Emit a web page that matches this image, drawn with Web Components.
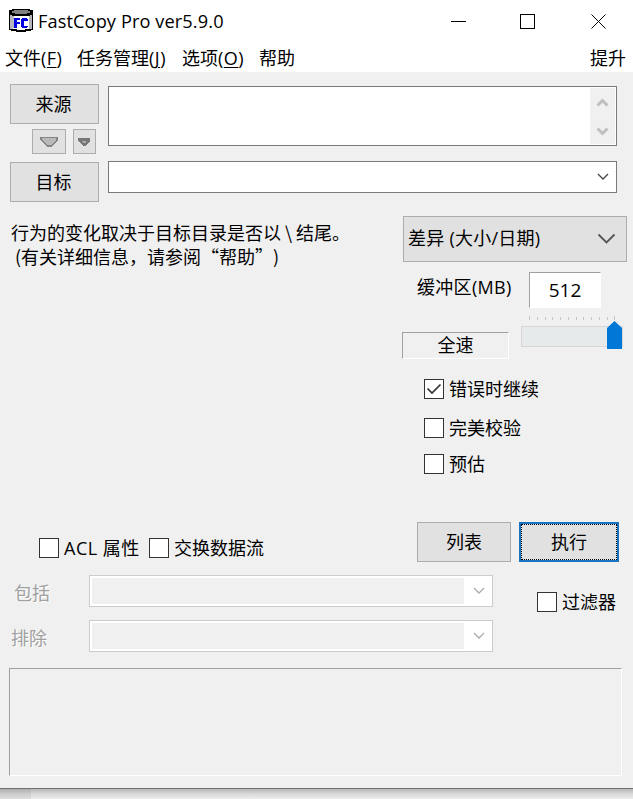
<!DOCTYPE html>
<html lang="zh-CN">
<head>
<meta charset="utf-8">
<title>FastCopy Pro</title>
<style>
  body {
    margin: 0;
    background: #e6e6e6;
    overflow: hidden;
  }
</style>
</head>
<body>
<fc-window></fc-window>
<fc-desktop></fc-desktop>

<script>
class FcElement extends HTMLElement {
  constructor() {
    super();
    this.shadow = this.attachShadow({mode: 'open'});
  }

  connectedCallback() {
    this.shadow.innerHTML = this.render();
  }
}

class FcTitlebar extends FcElement {
  render() {
    return `
      <style>
        :host {
          display: flex;
          align-items: center;
          height: 42px;
          padding-left: 9px;
          font-size: 18.2px;
          letter-spacing: .1px;
        }
        .title {
          flex: 1;
          margin-left: 5px;
          line-height: 42px;
          white-space: nowrap;
        }
        svg { display: block; }
        .controls {
          width: 195px;
          height: 42px;
        }
      </style>
      <svg width="24" height="24" shape-rendering="crispEdges">
        <path d="M3 0H21V1H24V21H22V22H17V23H7V22H2V21H0V1H3Z" fill="#000"/>
        <path d="M4 7H20V20H16V21H8V20H4Z" fill="#fff"/>
        <path d="M1 6H3V7H5V19H4V20H1ZM20 7H21V6H23V20H20Z" fill="#b4b4bc"/>
        <path d="M5 1H19V2H21V4H18V5H6V4H3V2H5Z" fill="#808080"/>
        <path d="M5 9H11V11H8V13H11V15H8V19H5ZM13 9H18V10H19V12H15V17H19V18H18V19H13V18H12V10H13Z" fill="#0000e0"/>
      </svg>
      <div class="title"><slot></slot></div>
      <svg class="controls" fill="none" stroke="#000" viewBox="-20 0 195 42">
        <path d="M-7 21.500H8M62.500 14.500H76.500V28.500H62.500Z" shape-rendering="crispEdges"/>
        <path d="M133.500 14.500L147.500 28.500M147.500 14.500L133.500 28.500"/>
      </svg>
    `;
  }
}

class FcMenubar extends FcElement {
  render() {
    return `
      <style>
        :host {
          display: flex;
          height: 30px;
          padding: 0 7px 0 5px;
          line-height: 32px;
        }
        ::slotted(:last-child) { margin-left: auto; }
      </style>
      <slot></slot>
    `;
  }
}

class FcMenu extends FcElement {
  render() {
    const key = this.getAttribute('key');
    return `
      <style>
        :host { display: block; white-space: nowrap; }
        span { letter-spacing: .5px; }
        u { text-underline-offset: 2px; text-decoration-thickness: 1px; }
      </style>
      <slot></slot>${key ? `<span>(<u>${key}</u>)</span>` : ''}
    `;
  }
}

class FcButton extends FcElement {
  render() {
    return `
      <style>
        :host {
          display: flex;
          align-items: center;
          justify-content: center;
          box-sizing: border-box;
          height: 40px;
          padding: 0 2px 2px 0;
          border: 1px solid #adadad;
          background: #e1e1e1;
        }
        :host([default]) {
          border: 2px solid #1874bf;
          outline: 1px dotted #000;
          outline-offset: -3px;
        }
      </style>
      <slot></slot>
    `;
  }
}

class FcMemo extends FcElement {
  render() {
    return `
      <style>
        :host {
          display: flex;
          justify-content: flex-end;
          box-sizing: border-box;
          height: 60px;
          padding: 1px;
          border: 1px solid #7a7a7a;
          background: #fff;
        }
        svg { background: #f0f0f0; }
      </style>
      <svg width="25" height="56" fill="none" stroke="#bfbfbf" stroke-width="3">
        <path d="M7.500 17.500L12.500 12.500L17.500 17.500M7.500 40.500L12.500 45.500L17.500 40.500"/>
      </svg>
    `;
  }
}

class FcCombo extends FcElement {
  render() {
    return `
      <style>
        :host {
          --arrow: #444;
          display: flex;
          align-items: stretch;
          box-sizing: border-box;
          height: 32px;
          padding: 2px;
          border: 1px solid #7a7a7a;
          background: #fff;
        }
        :host([disabled]) { --arrow: #aaa; border-color: #ccc; }
        :host([disabled]) .value { background: #f0f0f0; }
        .value { flex: 1; }
        svg { display: block; stroke: var(--arrow); }
      </style>
      <div class="value"></div>
      <svg width="26" height="26" fill="none" stroke-width="1.300">
        <path d="M10 10L15 15L20 10"/>
      </svg>
    `;
  }
}

class FcSelect extends FcElement {
  render() {
    return `
      <style>
        :host {
          display: flex;
          align-items: center;
          justify-content: space-between;
          box-sizing: border-box;
          height: 46px;
          padding: 0 10px 2px 4px;
          border: 1px solid #adadad;
          background: #e1e1e1;
          letter-spacing: .25px;
          white-space: nowrap;
        }
        span { padding-bottom: 2px; }
      </style>
      <span><slot></slot></span>
      <svg width="19" height="12" fill="none" stroke="#555" stroke-width="1.800">
        <path d="M1.500 2.500L9.500 10.500L17.500 2.500"/>
      </svg>
    `;
  }
}

class FcCheck extends FcElement {
  render() {
    const mark = this.hasAttribute('checked') ? '<path d="M3.500 9.500L8 14L16.500 5.500"/>' : '';
    return `
      <style>
        :host {
          display: flex;
          align-items: center;
          gap: 5px;
          height: 20px;
          line-height: 20px;
          white-space: nowrap;
        }
        svg {
          box-sizing: border-box;
          flex: none;
          border: 1px solid #333;
          background: #fff;
        }
      </style>
      <svg width="20" height="20" viewBox="1 1 18 18" fill="none" stroke="#333" stroke-width="1.700">${mark}</svg>
      <span><slot></slot></span>
    `;
  }
}

// Box with a one pixel sunken edge
class FcSunken extends FcElement {
  render() {
    return `
      <style>
        :host {
          display: block;
          box-sizing: border-box;
          border: 1px solid;
          border-color: #a0a0a0 #fff #fff #a0a0a0;
          text-align: center;
        }
      </style>
      <slot></slot>
    `;
  }
}

class FcSlider extends FcElement {
  render() {
    let ticks = '';
    for (let i = 0; i < 12; i++) {
      const x = Math.round(8 + i * 7.75);
      const end = i === 0 || i === 11;
      ticks += `<path d="M${x + 0.5} ${end ? 0 : 1}V4"/>`;
    }
    return `
      <style>
        :host { display: block; }
        svg { display: block; }
      </style>
      <svg width="103" height="34">
        <g stroke="#c4c4c4" shape-rendering="crispEdges">${ticks}</g>
        <rect x=".5" y="10.500" width="101" height="20" fill="#e7eaea" stroke="#d6d6d6"/>
        <path d="M86 33V12L93.500 5L101 12V33Z" fill="#0078d7"/>
      </svg>
    `;
  }
}

// Strip of desktop below the window, with the window's shadow on it
class FcDesktop extends FcElement {
  render() {
    return `
      <style>
        :host {
          display: block;
          height: 10px;
          background:
            linear-gradient(rgba(0, 0, 0, .22), rgba(0, 0, 0, .08) 5px, transparent),
            linear-gradient(90deg, #dedede 31px, #ececec 31px);
        }
      </style>
    `;
  }
}

class FcWindow extends FcElement {
  render() {
    return `
      <style>
        :host {
          display: flex;
          flex-direction: column;
          box-sizing: border-box;
          width: 633px;
          height: 789px;
          border-bottom: 1px solid #707070;
          background: #fff;
          color: #000;
          font: 18px "Open Sans", "Noto Sans CJK SC", sans-serif;
        }
        .client {
          flex: 1;
          padding: 12px 6px 0 9px;
          background: #f0f0f0;
        }
        .paths {
          display: grid;
          grid-template-columns: 89px 509px;
          column-gap: 9px;
          height: 132px;
          padding-left: 1px;
        }
        .small {
          display: flex;
          gap: 7px;
          padding: 5px 0 8px 22px;
        }
        .small fc-button { height: 25px; padding: 0 1px 0 0; }
        .fields { padding-top: 2px; }
        .fields fc-combo { margin-top: 15px; }
        .main {
          display: flex;
          justify-content: space-between;
          height: 306px;
        }
        .note {
          padding: 4px 0 0 2px;
          font-family: "Noto Sans CJK SC", sans-serif;
          line-height: 24px;
          text-spacing-trim: space-all;
          white-space: pre;
        }
        .options { width: 225px; }
        .options > fc-select { margin-left: 1px; }
        .buffer {
          display: grid;
          grid-template-columns: 119px 103px;
          margin-top: 10px;
        }
        .buffer .name {
          padding-left: 15px;
          letter-spacing: .3px;
          line-height: 30px;
          white-space: nowrap;
        }
        .size {
          width: 72px;
          height: 36px;
          margin-left: 8px;
          background: #fff;
          font-size: 19px;
          line-height: 34px;
        }
        .speed {
          width: 107px;
          height: 27px;
          margin-top: 30px;
          line-height: 24px;
        }
        fc-slider { margin-top: 8px; }
        .checks { display: grid; padding: 20px 0 0 22px; }
        .checks fc-check { margin-bottom: 19px; }
        .checks fc-check:nth-child(2) { margin-bottom: 16px; }
        .actions { display: flex; height: 53px; }
        .actions fc-button { height: 40px; padding: 0 0 2px; }
        .actions fc-check { margin: 16px 10px 0 0; }
        .actions fc-check:first-child {
          width: 100px;
          margin-left: 30px;
          letter-spacing: .5px;
        }
        .actions .list { width: 94px; margin-left: auto; }
        .actions .run { width: 100px; margin: 0 8px; }
        .filters {
          display: grid;
          grid-template-columns: 80px 404px 1fr;
          grid-template-rows: 32px 32px;
          row-gap: 13px;
          line-height: 37px;
        }
        .off { color: #a0a0a0; text-shadow: 1px 1px #fff; }
        .filters .off:first-child { padding-left: 5px; }
        .filters .exclude { padding-left: 2px; }
        .filters fc-check {
          grid-row: 1 / 3;
          grid-column: 3;
          margin: 17px 0 0 44px;
        }
        .log { width: 613px; height: 108px; margin-top: 16px; }
      </style>
      <fc-titlebar>FastCopy Pro ver5.9.0</fc-titlebar>
      <fc-menubar>
        <fc-menu key="F" style="width: 72px">文件</fc-menu>
        <fc-menu key="J" style="width: 105px">任务管理</fc-menu>
        <fc-menu key="O" style="width: 77px">选项</fc-menu>
        <fc-menu>帮助</fc-menu>
        <fc-menu>提升</fc-menu>
      </fc-menubar>
      <div class="client">
        <div class="paths">
          <div>
            <fc-button>来源</fc-button>
            <div class="small">
              <fc-button style="width: 34px">
                <svg width="18" height="10" shape-rendering="crispEdges"><path d="M0 0H18V3L11 10H7L0 3Z" fill="#848484"/><path d="M2 1H16V3L11 8H7L2 3Z" fill="#b9b9b9"/></svg>
              </fc-button>
              <fc-button style="width: 23px">
                <svg width="12" height="8" shape-rendering="crispEdges"><path d="M0 0H12V3L7 8H5L0 3Z" fill="#777"/><path d="M4 3H8V4L7 5H5L4 4Z" fill="#aaa"/></svg>
              </fc-button>
            </div>
            <fc-button>目标</fc-button>
          </div>
          <div class="fields">
            <fc-memo></fc-memo>
            <fc-combo></fc-combo>
          </div>
        </div>
        <div class="main">
          <div class="note">行为的变化取决于目标目录是否以 \\ 结尾。
 (有关详细信息，请参阅“帮助”)</div>
          <div class="options">
            <fc-select>差异 (大小/日期)</fc-select>
            <div class="buffer">
              <div>
                <div class="name">缓冲区(MB)</div>
                <fc-sunken class="speed">全速</fc-sunken>
              </div>
              <div>
                <fc-sunken class="size">512</fc-sunken>
                <fc-slider></fc-slider>
              </div>
            </div>
            <div class="checks">
              <fc-check checked>错误时继续</fc-check>
              <fc-check>完美校验</fc-check>
              <fc-check>预估</fc-check>
            </div>
          </div>
        </div>
        <div class="actions">
          <fc-check>ACL 属性</fc-check>
          <fc-check>交换数据流</fc-check>
          <fc-button class="list">列表</fc-button>
          <fc-button class="run" default>执行</fc-button>
        </div>
        <div class="filters">
          <div class="off">包括</div>
          <fc-combo disabled></fc-combo>
          <div class="off exclude">排除</div>
          <fc-combo disabled></fc-combo>
          <fc-check>过滤器</fc-check>
        </div>
        <fc-sunken class="log"></fc-sunken>
      </div>
    `;
  }
}

customElements.define('fc-titlebar', FcTitlebar);
customElements.define('fc-menubar', FcMenubar);
customElements.define('fc-menu', FcMenu);
customElements.define('fc-button', FcButton);
customElements.define('fc-memo', FcMemo);
customElements.define('fc-combo', FcCombo);
customElements.define('fc-select', FcSelect);
customElements.define('fc-check', FcCheck);
customElements.define('fc-sunken', FcSunken);
customElements.define('fc-slider', FcSlider);
customElements.define('fc-desktop', FcDesktop);
customElements.define('fc-window', FcWindow);
</script>
</body>
</html>
